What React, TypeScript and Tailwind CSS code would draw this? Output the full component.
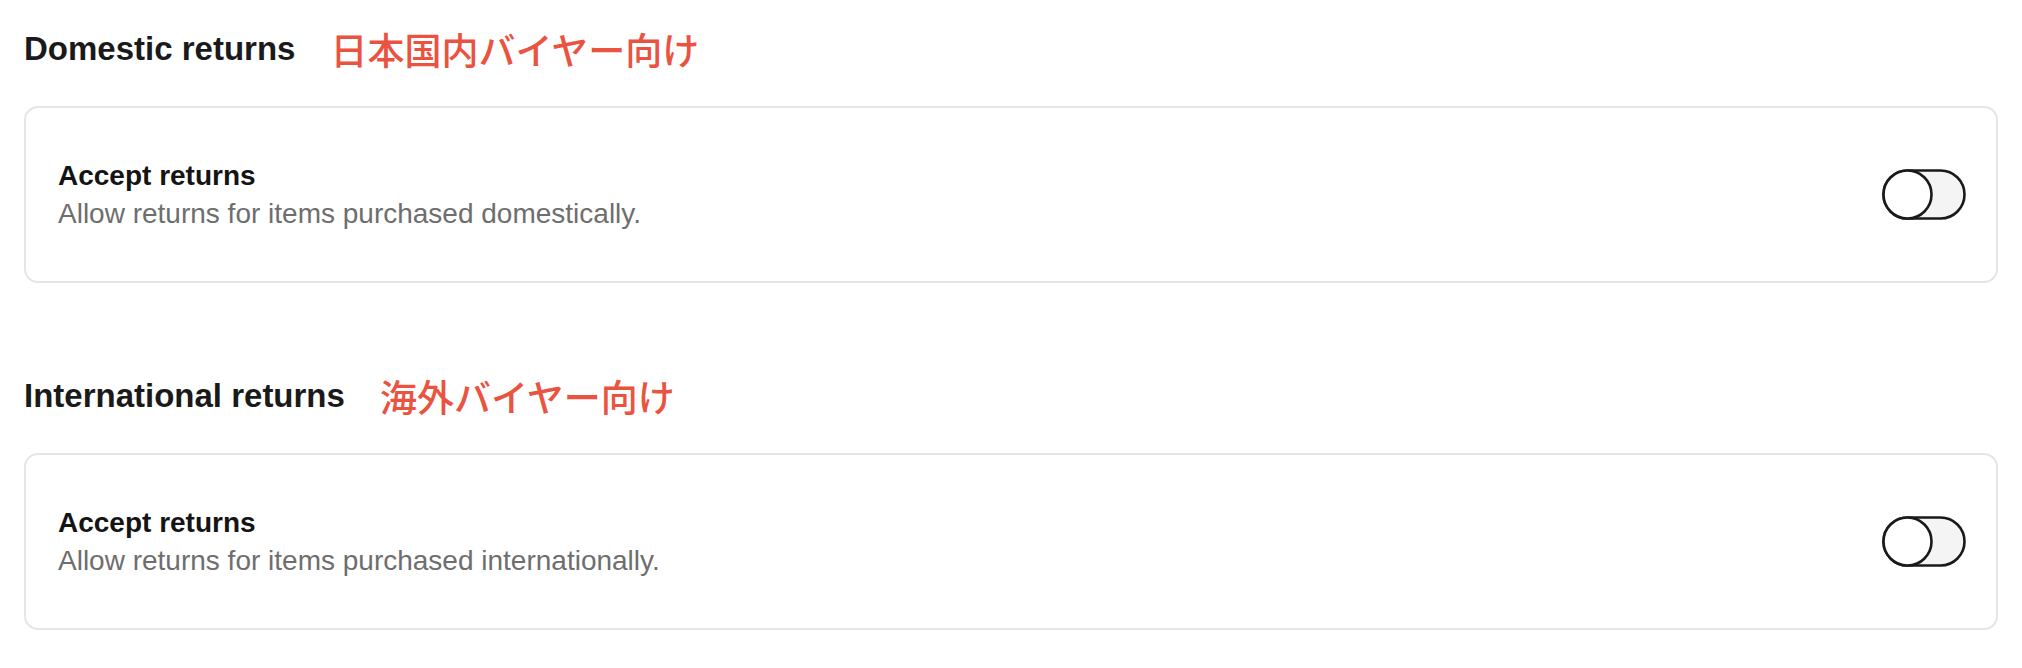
import React from "react";

const sections = [
  {
    title: "Domestic returns",
    note: "日本国内バイヤー向け",
    desc: "Allow returns for items purchased domestically.",
  },
  {
    title: "International returns",
    note: "海外バイヤー向け",
    desc: "Allow returns for items purchased internationally.",
  },
];

function Toggle() {
  return (
    <svg width="84" height="51" viewBox="0 0 84 51" fill="none">
      <rect x="1.5" y="1.5" width="81" height="48" rx="24" fill="#f4f4f4" stroke="#1a1a1a" strokeWidth="2.6" />
      <circle cx="25.5" cy="25.5" r="24" fill="#ffffff" stroke="#1a1a1a" strokeWidth="2.6" />
    </svg>
  );
}

export default function App() {
  return (
    <div
      className="min-h-[668px] w-full bg-white px-6 pt-[29px]"
      style={{ fontFamily: '"Liberation Sans", Arial, sans-serif' }}
    >
      <div className="flex flex-col gap-[93px]">
        {sections.map((s) => (
          <section key={s.title}>
            <div className="flex h-10 items-center gap-[35px]">
              <h2 className="text-[33px] font-bold leading-10 text-[#1a1a1a]">{s.title}</h2>
              <span
                className="text-[37px] font-medium leading-10 text-[#e9533f]"
                style={{ fontFamily: '"Noto Sans CJK JP", sans-serif' }}
              >
                {s.note}
              </span>
            </div>

            <div className="mt-[37px] flex h-[177px] items-center justify-between rounded-[14px] border-2 border-[#e5e5e5] pl-8 pr-[30px]">
              <div>
                <div className="text-[28px] font-bold leading-[38px] text-[#141414]">Accept returns</div>
                <div className="text-[28px] leading-[38px] text-[#6e6e6e]">{s.desc}</div>
              </div>
              <Toggle />
            </div>
          </section>
        ))}
      </div>
    </div>
  );
}
